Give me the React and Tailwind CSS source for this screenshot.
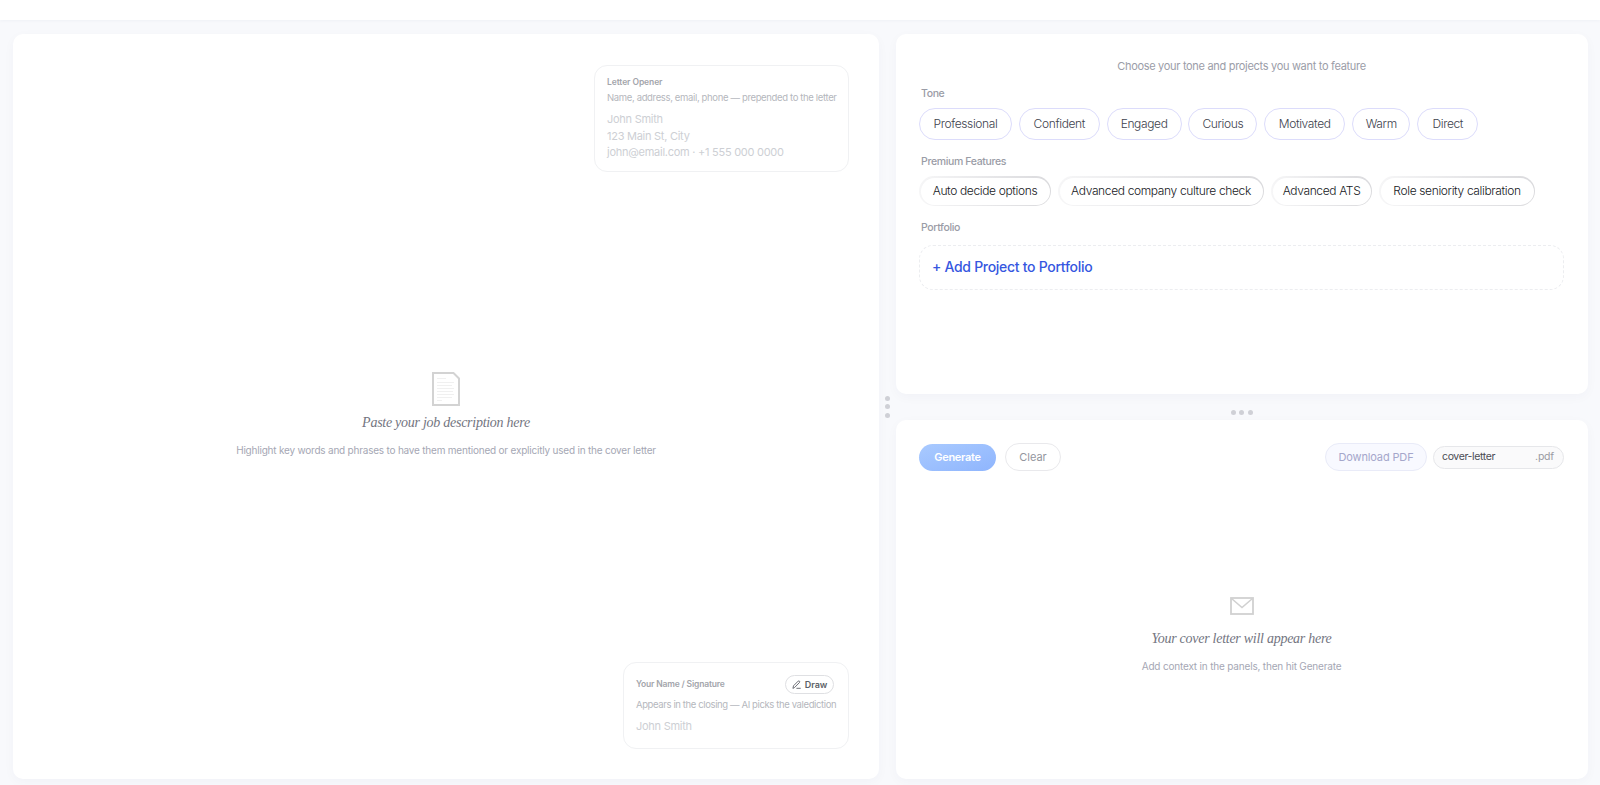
import { useState } from "react";

const TONES = [
  { label: "Professional", width: "w-[93px]" },
  { label: "Confident", width: "w-[81px]" },
  { label: "Engaged", width: "w-[75px]" },
  { label: "Curious", width: "w-[69px]" },
  { label: "Motivated", width: "w-[81px]" },
  { label: "Warm", width: "w-[58.5px]" },
  { label: "Direct", width: "w-[61px]" },
];

const PREMIUM = [
  { label: "Auto decide options", width: "w-[132px]" },
  { label: "Advanced company culture check", width: "w-[206px]" },
  { label: "Advanced ATS", width: "w-[101px]" },
  { label: "Role seniority calibration", width: "w-[156px]" },
];

function Panel({ className = "", children }) {
  return (
    <section
      className={`rounded-[10px] bg-white shadow-[0_3px_12px_rgba(30,40,90,0.03)] ${className}`}
    >
      {children}
    </section>
  );
}

function Dots({ vertical }) {
  return (
    <div className={vertical ? "flex flex-col gap-[3.5px]" : "flex gap-[3.5px]"}>
      <span className="size-[5px] rounded-full bg-[#cfd0d6]" />
      <span className="size-[5px] rounded-full bg-[#cfd0d6]" />
      <span className="size-[5px] rounded-full bg-[#cfd0d6]" />
    </div>
  );
}

function PageIcon() {
  return (
    <svg width="28" height="34" viewBox="0 0 28 34" fill="none">
      <path d="M1 1H21.5L27 6.5V33H1Z" stroke="#d3d3d3" strokeWidth="2" />
      <path
        d="M5 6.5H14M5 10.5H22M5 13.5H20M5 16.5H22M5 19.5H21M5 22.5H22M5 25.5H20M5 28.5H10"
        stroke="#f0f0f0"
      />
    </svg>
  );
}

function EnvelopeIcon() {
  return (
    <svg width="24" height="18" viewBox="0 0 24 18" fill="none" stroke="#d1d1d1">
      <rect x="1" y="1" width="22" height="16" strokeWidth="1.8" />
      <path d="M1.5 1.5L12 10.5L22.5 1.5" strokeWidth="1.6" />
    </svg>
  );
}

function PenIcon() {
  return (
    <svg
      width="9"
      height="9"
      viewBox="0 0 9 9"
      fill="none"
      stroke="#5c5f66"
      strokeWidth="0.9"
      strokeLinecap="round"
      strokeLinejoin="round"
    >
      <path d="M1 8L1.5 5.8L6.2 1.1Q6.9 .6 7.5 1.2Q8 1.8 7.5 2.5L2.9 7.2Z" />
      <path d="M4.8 8.3H8.3" />
    </svg>
  );
}

function Label({ children }) {
  return (
    <div className="pl-[2px] text-[10.5px] leading-[14px] font-medium tracking-[-0.034em] text-[#9a9ca6]">
      {children}
    </div>
  );
}

export default function App() {
  const [fileName, setFileName] = useState("cover-letter");

  return (
    <div className="flex h-[785px] flex-col overflow-hidden bg-[#f8f9fc] font-['Inter',sans-serif] whitespace-nowrap">
      <header className="h-5 shrink-0 bg-white shadow-[0_1px_3px_rgba(30,40,90,0.04)]" />

      <main className="flex flex-1 pt-[14px] pr-3 pb-[6px] pl-[13px]">
        {/* Job description */}
        <Panel className="flex w-[866px] flex-col items-end justify-between pt-[31px] pr-[30px] pb-[30px]">
          <div className="h-[107px] w-[255px] rounded-[13px] border border-[#f0f1f3] px-3 pt-[10px]">
            <div className="text-[8.5px] leading-[12px] font-semibold tracking-[-0.01em] text-[#a3a5ab]">
              Letter Opener
            </div>
            <div className="mt-[4px] text-[9.5px] leading-[12px] tracking-[-0.037em] text-[#b5b7bd]">
              Name, address, email, phone — prepended to the letter
            </div>
            <div className="mt-[7px] text-[11px] leading-[16.7px] tracking-[-0.024em] text-[#cdcfd4]">
              <div>John Smith</div>
              <div>123 Main St, City</div>
              <div>john@email.com · +1 555 000 0000</div>
            </div>
          </div>

          <div className="mb-[5px] flex flex-col items-center self-stretch pl-[30px]">
            <PageIcon />
            <h2 className="mt-[7px] font-['Liberation_Serif',serif] text-[14px] leading-5 tracking-[-0.019em] text-[#73757f] italic">
              Paste your job description here
            </h2>
            <p className="mt-[10px] text-[10px] leading-[14px] tracking-[-0.021em] text-[#a5a7b4]">
              Highlight key words and phrases to have them mentioned or explicitly used in the cover letter
            </p>
          </div>

          <div className="h-[87px] w-[226px] rounded-[13px] border border-[#f0f1f3] px-3 pt-3">
            <div className="flex items-center justify-between pr-[2px]">
              <span className="text-[8.5px] font-semibold tracking-[-0.02em] text-[#a3a5ab]">
                Your Name / Signature
              </span>
              <button className="flex h-[19px] w-[49px] items-center justify-center gap-1 rounded-full border-[1.5px] border-[#dfe0e3] text-[9px] font-semibold text-[#5c5f66]">
                <PenIcon />
                Draw
              </button>
            </div>
            <div className="mt-[5px] text-[9.5px] leading-[12px] tracking-[-0.04em] text-[#b5b7bd]">
              Appears in the closing — AI picks the valediction
            </div>
            <div className="mt-[7px] text-[11px] leading-[16px] tracking-[-0.024em] text-[#cdcfd4]">
              John Smith
            </div>
          </div>
        </Panel>

        <div className="flex w-[17px] items-center justify-center">
          <Dots vertical />
        </div>

        <div className="flex flex-1 flex-col">
          {/* Options */}
          <Panel className="h-[360px] pt-[25px] pr-6 pl-[23px]">
            <p className="text-center text-[11px] leading-[14px] tracking-[-0.028em] text-[#9b9da8]">
              Choose your tone and projects you want to feature
            </p>
            <div className="mt-[14px]">
              <Label>Tone</Label>
            </div>
            <div className="mt-[7px] flex gap-[6.8px]">
              {TONES.map((tone) => (
                <button
                  key={tone.label}
                  className={`h-8 rounded-full border border-[#dcdcfb] text-[12px] font-light tracking-[-0.03em] text-[#40424d] ${tone.width}`}
                >
                  {tone.label}
                </button>
              ))}
            </div>
            <div className="mt-[15px]">
              <Label>Premium Features</Label>
            </div>
            <div className="mt-[7px] flex gap-[7px]">
              {PREMIUM.map((item) => (
                <div
                  key={item.label}
                  className={`flex h-[30px] rounded-full bg-linear-to-r from-[#f6f6f7] to-[#dadadd] p-[1.5px] ${item.width}`}
                >
                  <button className="flex-1 rounded-full bg-white pb-px text-[12px] font-light tracking-[-0.03em] text-[#16171c]">
                    {item.label}
                  </button>
                </div>
              ))}
            </div>
            <div className="mt-[15px]">
              <Label>Portfolio</Label>
            </div>
            <button className="mt-[10px] block h-[45px] w-full rounded-[14px] border border-dashed border-[#ecedf0] pb-[2px] pl-3 text-left text-[14px] font-medium tracking-[-0.021em] text-[#3657e0]">
              + Add Project to Portfolio
            </button>
          </Panel>

          <div className="flex h-[26px] items-center justify-center pt-[11px] pr-px">
            <Dots />
          </div>

          {/* Result */}
          <Panel className="flex flex-1 flex-col pt-[23px] pr-6 pl-[23px]">
            <div className="flex h-7 items-center">
              <button className="h-[27px] w-[77px] rounded-full bg-linear-to-br from-[#a9caff] to-[#8fb5fd] text-[11px] font-semibold tracking-[-0.027em] text-white">
                Generate
              </button>
              <button className="ml-[9px] h-[28px] w-[56px] rounded-full border border-[#e9e9ec] text-[11px] text-[#94969e]">
                Clear
              </button>
              <button className="ml-auto h-[28px] w-[102px] rounded-full border border-[#e9ebf8] bg-[#f8f9ff] text-[11px] tracking-[-0.012em] text-[#a5a7cb]">
                Download PDF
              </button>
              <div className="ml-[6px] flex h-[23px] w-[131px] items-center justify-between rounded-full border border-[#e6e7ea] bg-[#fafafb] pr-[9px] pl-[8px] text-[10.5px]">
                <input
                  value={fileName}
                  onChange={(e) => setFileName(e.target.value)}
                  className="w-[80px] bg-transparent tracking-[-0.035em] text-[#4a4c54] outline-none"
                />
                <span className="tracking-[-0.02em] text-[#9a9ca4]">.pdf</span>
              </div>
            </div>
            <div className="mt-[126px] flex flex-col items-center">
              <EnvelopeIcon />
              <h2 className="mt-[14px] font-['Liberation_Serif',serif] text-[14px] leading-5 tracking-[-0.019em] text-[#73757f] italic">
                Your cover letter will appear here
              </h2>
              <p className="mt-[10px] text-[10px] leading-[14px] tracking-[-0.018em] text-[#a5a7b4]">
                Add context in the panels, then hit Generate
              </p>
            </div>
          </Panel>
        </div>
      </main>
    </div>
  );
}
